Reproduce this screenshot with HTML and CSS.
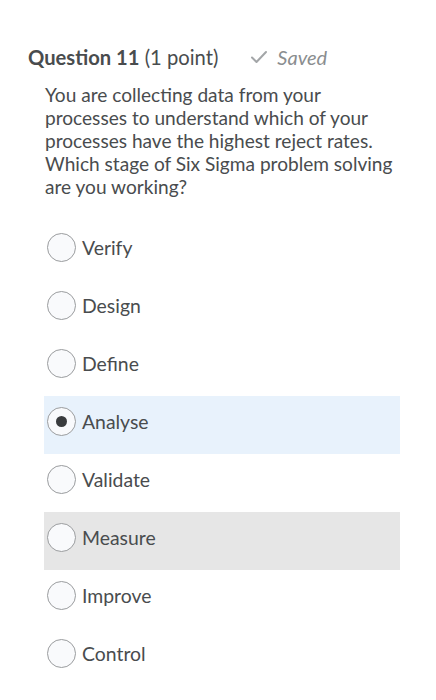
FILE: index.html
```html
<!DOCTYPE html>
<html>
<head>
<meta charset="utf-8">
<link rel="stylesheet" href="styles.css">
</head>
<body>
<div class="page">
  <div class="header">
    <h2 class="title"><b>Question 11</b> (1 point)</h2>
    <span class="saved">
      <svg class="check" width="18" height="14" viewBox="0 0 18 14"><path d="M2 7.5 L6.5 12 L16 2" fill="none" stroke="#a3a6a8" stroke-width="2" stroke-linecap="round" stroke-linejoin="round"/></svg>
      <i>Saved</i>
    </span>
  </div>
  <p class="question">You are collecting data from your processes to understand which of your processes have the highest reject rates. Which stage of Six Sigma problem solving are you working?</p>
  <div class="options">
    <div class="opt"><span class="radio"></span><span>Verify</span></div>
    <div class="opt"><span class="radio"></span><span>Design</span></div>
    <div class="opt"><span class="radio"></span><span>Define</span></div>
    <div class="opt selected"><span class="radio checked"></span><span>Analyse</span></div>
    <div class="opt"><span class="radio"></span><span>Validate</span></div>
    <div class="opt hover"><span class="radio"></span><span>Measure</span></div>
    <div class="opt"><span class="radio"></span><span>Improve</span></div>
    <div class="opt"><span class="radio"></span><span>Control</span></div>
  </div>
</div>
</body>
</html>
```
FILE: styles.css
```css
html, body { margin: 0; padding: 0; background: #fff; }
body { font-family: Lato, "Open Sans", sans-serif; color: #494c4e; }
.page { padding: 43px 36px 0 28px; }
.header { display: flex; align-items: center; height: 28px; }
.title { margin: 0; font-size: 20.2px; font-weight: 400; color: #494c4e; }
.title b { font-weight: 700; }
.saved { display: flex; align-items: center; margin-left: 32px; color: #8a8d8f; font-size: 20px; }
.check { margin-right: 9px; }
.question { margin: 12px -6px 0 17px; font-size: 19.1px; line-height: 23px; color: #494c4e; }
.options { margin: 24px 0 0 16px; }
.opt { display: flex; align-items: center; box-sizing: border-box; height: 58px; padding: 0 0 8px 3px; font-size: 19.4px; }
.opt.selected { background: #e8f2fc; }
.opt.hover { background: #e6e6e6; }
.radio { width: 27px; height: 27px; border: 1px solid #9a9c9e; border-radius: 50%; background: #f9fafc; margin-right: 6px; box-sizing: content-box; display: flex; align-items: center; justify-content: center; }
.radio.checked::after { content: ""; width: 11px; height: 11px; border-radius: 50%; background: #3a3c3e; }
```
